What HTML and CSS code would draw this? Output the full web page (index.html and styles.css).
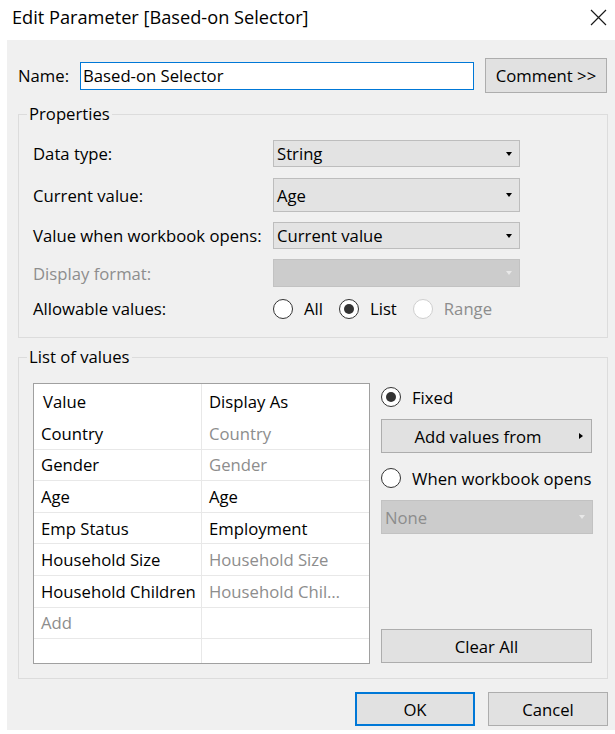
FILE: index.html
```html
<!DOCTYPE html>
<html>
<head>
<meta charset="utf-8">
<title>Edit Parameter</title>
<link rel="stylesheet" href="styles.css">
</head>
<body>
<div class="titlebar">
  <span class="title">Edit Parameter [Based-on Selector]</span>
  <svg class="close" width="17" height="17" viewBox="0 0 17 17"><path d="M1 1L16 16M16 1L1 16" stroke="#1a1a1a" stroke-width="1.2" fill="none"/></svg>
</div>
<div class="dialog">
  <div class="name-row">
    <span class="name-label">Name:</span>
    <div class="textbox">Based-on Selector</div>
    <div class="btn comment">Comment &gt;&gt;</div>
  </div>

  <fieldset class="group props">
    <legend>Properties</legend>
    <div class="prop-row r1">
      <span class="lbl">Data type:</span>
      <div class="combo h27"><span>String</span><i class="arrow"></i></div>
    </div>
    <div class="prop-row r2">
      <span class="lbl">Current value:</span>
      <div class="combo h34"><span>Age</span><i class="arrow"></i></div>
    </div>
    <div class="prop-row r3">
      <span class="lbl">Value when workbook opens:</span>
      <div class="combo h27"><span>Current value</span><i class="arrow"></i></div>
    </div>
    <div class="prop-row r4">
      <span class="lbl dim">Display format:</span>
      <div class="combo h28 disabled"><span></span><i class="arrow"></i></div>
    </div>
    <div class="prop-row r5">
      <span class="lbl">Allowable values:</span>
      <div class="radios">
        <span class="opt"><i class="radio"></i><span>All</span></span>
        <span class="opt"><i class="radio on"></i><span>List</span></span>
        <span class="opt dim"><i class="radio dis"></i><span>Range</span></span>
      </div>
    </div>
  </fieldset>

  <fieldset class="group list">
    <legend>List of values</legend>
    <div class="list-body">
      <div class="table">
        <div class="cell c1 head">Value</div><div class="cell c2 head">Display As</div>
        <div class="cell c1">Country</div><div class="cell c2 dim">Country</div>
        <div class="cell c1">Gender</div><div class="cell c2 dim">Gender</div>
        <div class="cell c1">Age</div><div class="cell c2">Age</div>
        <div class="cell c1">Emp Status</div><div class="cell c2">Employment</div>
        <div class="cell c1">Household Size</div><div class="cell c2 dim">Household Size</div>
        <div class="cell c1">Household Children</div><div class="cell c2 dim">Household Chil…</div>
        <div class="cell c1 dim">Add</div><div class="cell c2"></div>
        <div class="cell c1 last"></div><div class="cell c2 last"></div>
      </div>
      <div class="side">
        <div class="opt side-opt"><i class="radio on"></i><span>Fixed</span></div>
        <div class="btn add"><span class="add-text">Add values from</span><span class="add-arrow"><i class="rarrow"></i></span></div>
        <div class="opt side-opt when"><i class="radio"></i><span>When workbook opens</span></div>
        <div class="combo h34 disabled none"><span>None</span><i class="arrow"></i></div>
        <div class="btn clear">Clear All</div>
      </div>
    </div>
  </fieldset>

  <div class="footer">
    <div class="btn ok">OK</div>
    <div class="btn cancel">Cancel</div>
  </div>
</div>
</body>
</html>
```

FILE: styles.css
```css
* { box-sizing: border-box; }
html, body { margin: 0; padding: 0; background: #ffffff; }
body {
  font-family: "Open Sans", "Noto Sans", sans-serif;
  font-size: 16.7px;
  color: #000;
  width: 615px;
  height: 734px;
  overflow: hidden;
}

.titlebar {
  height: 40px;
  display: flex;
  align-items: center;
  justify-content: space-between;
  padding: 0 8px 6px 12px;
}
.title { font-size: 18.2px; color: #000; }
.close { display: block; }

.dialog {
  margin-left: 7px;
  height: 690px;
  background: #f0f0f0;
  padding: 18px 7px 0 11px;
}

.name-row { display: flex; align-items: center; height: 35px; }
.name-label { width: 62px; }
.textbox {
  width: 394px;
  height: 28px;
  background: #fff;
  border: 1px solid #0078d7;
  padding-left: 2px;
  display: flex;
  align-items: center;
}

.btn {
  background: #e1e1e1;
  border: 1px solid #adadad;
  display: flex;
  align-items: center;
  justify-content: center;
}
.comment { margin-left: 11px; width: 122px; height: 35px; }

.group {
  margin: 0;
  min-width: 0;
  border: 1px solid #dcdcdc;
}
.group legend {
  padding: 0 2px;
  margin-left: -6px;
  line-height: 22px;
}
.props { margin-top: 10px; padding: 15px 0 18px 14px; }
.list { margin-top: 8px; padding: 15px 0 14px 14px; }

.prop-row { display: flex; align-items: center; }
.lbl { width: 240px; }
.dim { color: #8d8d8d; }
.r2 { margin-top: 11px; }
.r3 { margin-top: 10px; }
.r4 { margin-top: 10px; }
.r5 { margin-top: 11px; height: 21px; }

.combo {
  width: 247px;
  display: flex;
  align-items: center;
  justify-content: space-between;
  background: #e3e3e3;
  border: 1px solid #bdbdbd;
  padding: 0 7px 0 3px;
}
.h27 { height: 27px; }
.h28 { height: 28px; }
.h34 { height: 34px; }
.combo .arrow {
  width: 0;
  height: 0;
  border-left: 3.5px solid transparent;
  border-right: 3.5px solid transparent;
  border-top: 4px solid #000;
}
.combo.disabled { background: #cccccc; border-color: #c2c2c2; color: #8d8d8d; }
.combo.disabled .arrow { border-top-color: #e8e8e8; }

.radios { display: flex; align-items: center; }
.opt { display: inline-flex; align-items: center; gap: 11px; }
.radios .opt { margin-right: 16px; }
.radio {
  width: 20px;
  height: 20px;
  border-radius: 50%;
  border: 1px solid #333;
  background: #fff;
  display: flex;
  align-items: center;
  justify-content: center;
}
.radio.on::after {
  content: "";
  width: 10px;
  height: 10px;
  border-radius: 50%;
  background: #333;
}
.radio.dis { border-color: #cfcfcf; }

.list-body { display: flex; }
.table {
  width: 337px;
  height: 281px;
  border: 1px solid #a0a0a0;
  background: #fff;
  display: grid;
  grid-template-columns: 168px 1fr;
  grid-template-rows: 34px repeat(7, 31.6px) 1fr;
}
.cell {
  display: flex;
  align-items: center;
  padding-left: 7px;
  border-bottom: 1px solid #e8e8e8;
  white-space: nowrap;
  overflow: hidden;
}
.cell.c1 { border-right: 1px solid #e8e8e8; }
.cell.head { border-bottom: none; }
.cell.c1.head { padding-left: 9px; }
.cell.last { border-bottom: none; }

.side {
  margin-left: 11px;
  width: 212px;
  height: 281px;
  display: flex;
  flex-direction: column;
}
.side-opt { height: 28px; display: flex; }
.add { margin-top: 8px; height: 34px; width: 211px; }
.add-text { flex: 1; text-align: center; }
.add-arrow { width: 17px; display: flex; align-items: center; }
.rarrow {
  width: 0;
  height: 0;
  margin-left: 5px;
  border-top: 3.5px solid transparent;
  border-bottom: 3.5px solid transparent;
  border-left: 4px solid #000;
}
.when { margin-top: 11px; }
.none { margin-top: 8px; width: 212px; padding-left: 3px; }
.clear { margin-top: auto; margin-bottom: 1px; height: 34px; width: 211px; }

.footer {
  margin-top: 13px;
  display: flex;
  justify-content: flex-end;
  gap: 13px;
}
.footer .btn { width: 120px; height: 34px; }
.ok { border: 2px solid #0078d7; }
```
